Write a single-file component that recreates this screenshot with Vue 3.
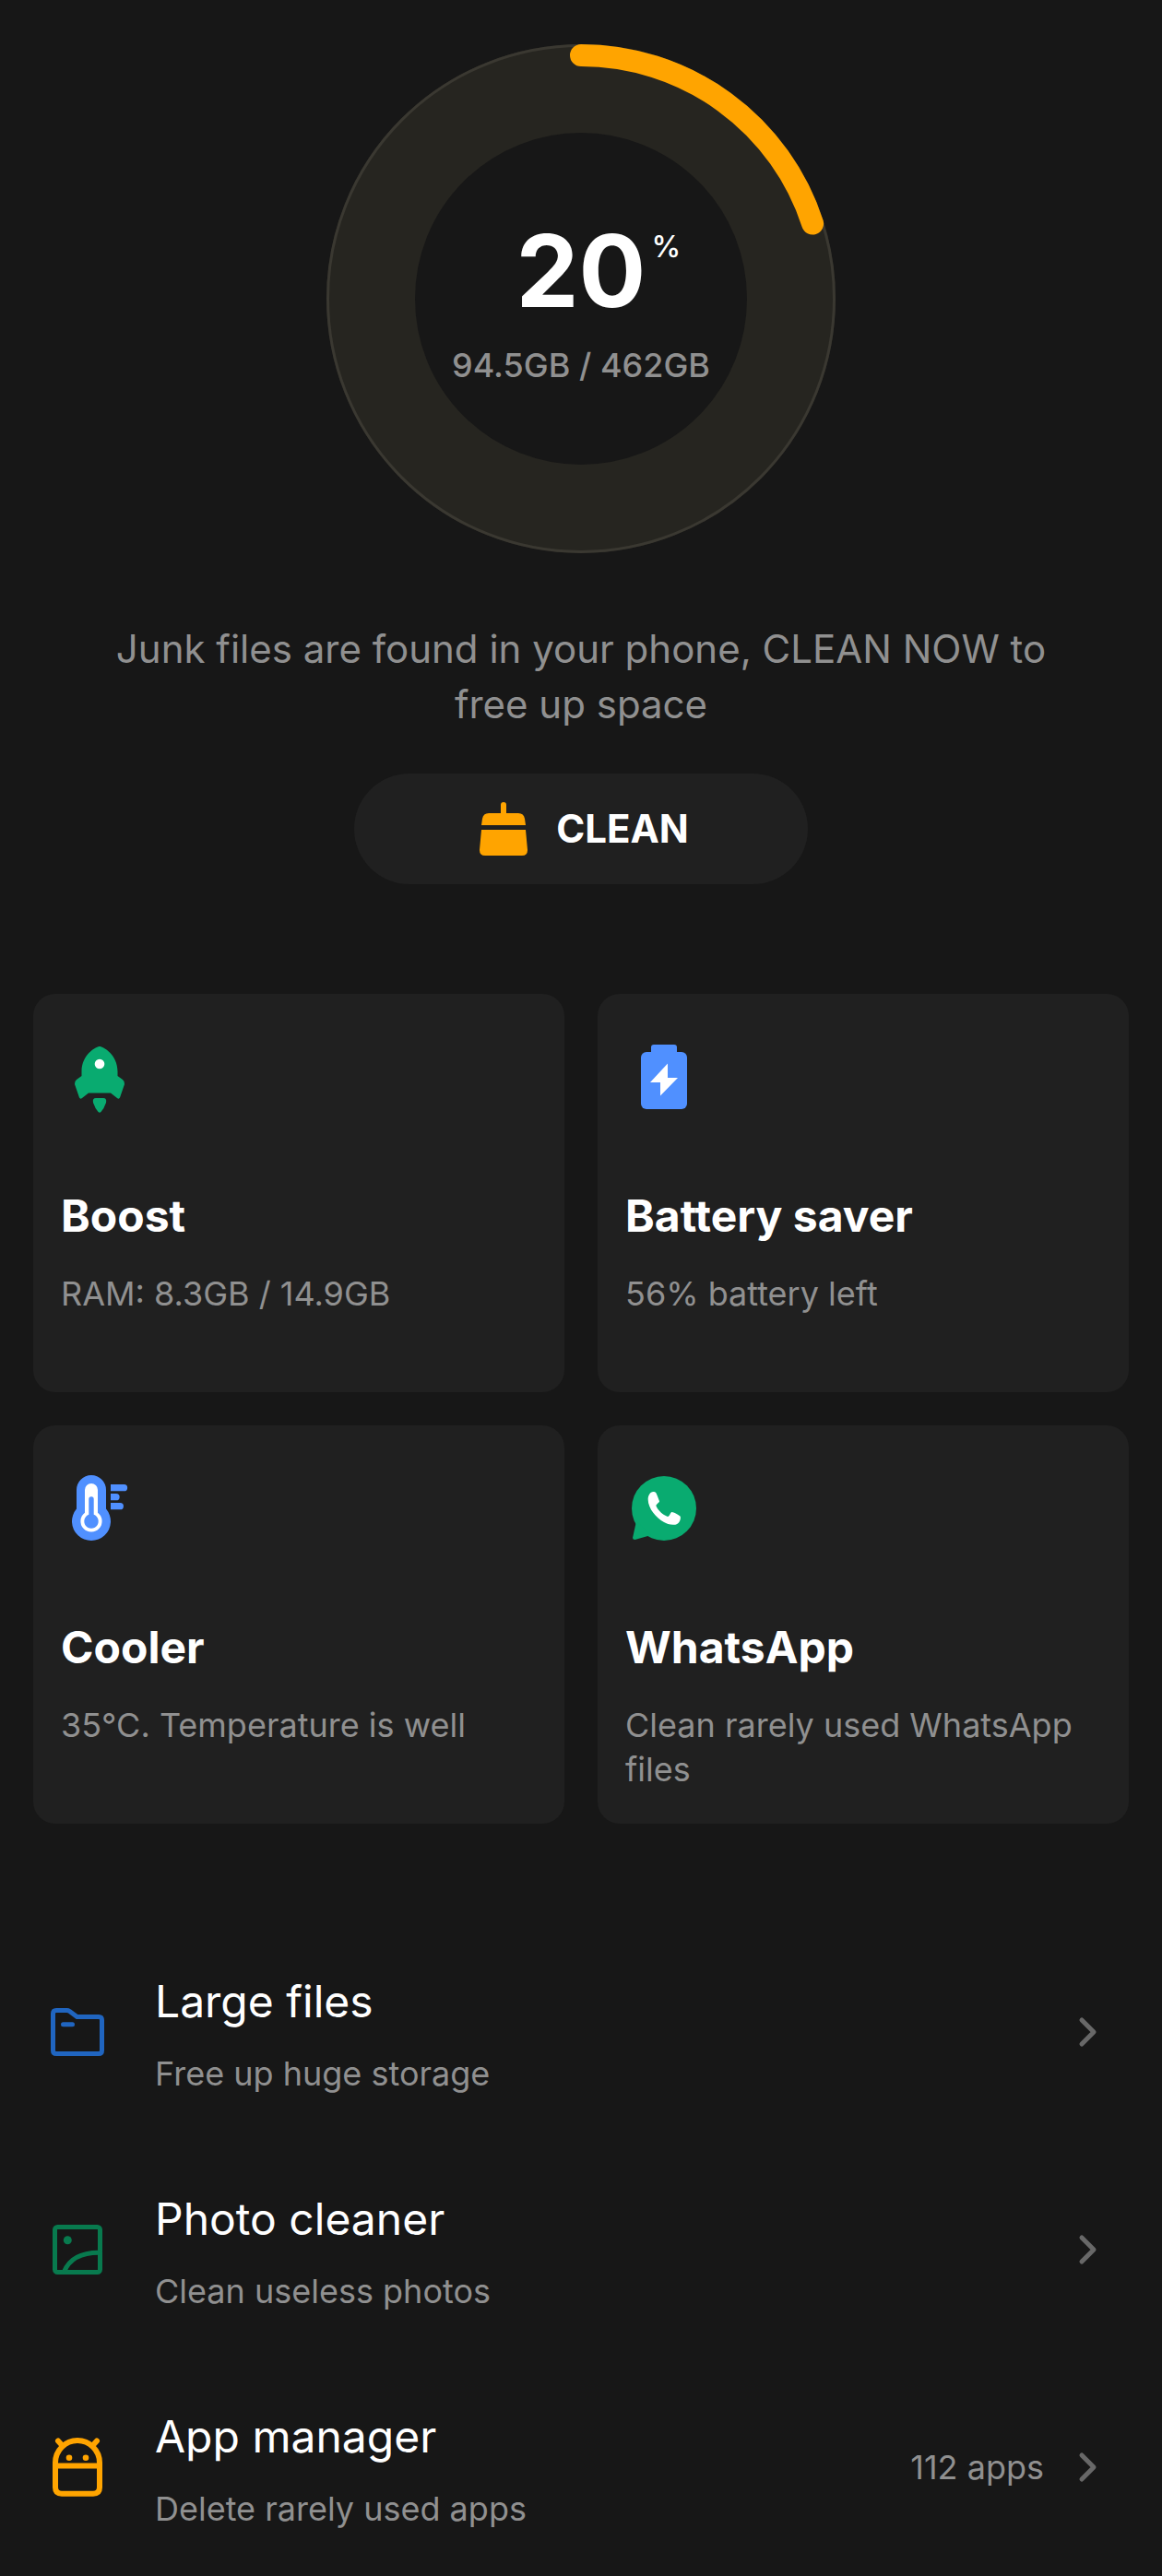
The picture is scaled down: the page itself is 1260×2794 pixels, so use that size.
<template>
  <main class="cleaner">
    <section class="hero">
      <div class="gauge">
        <svg class="gauge-ring" viewBox="0 0 552 552" aria-hidden="true">
          <circle class="track" cx="276" cy="276" r="228" />
          <circle class="rim" cx="276" cy="276" r="274.500" />
          <circle
            class="progress"
            cx="276"
            cy="276"
            r="264"
            pathLength="100"
            :stroke-dasharray="`${usedPercent} 100`"
            transform="rotate(-90 276 276)"
          />
        </svg>
        <div class="gauge-text">
          <p class="percent">{{ usedPercent }}<span class="sign">%</span></p>
          <p class="storage">{{ used }} / {{ total }}</p>
        </div>
      </div>
      <p class="message">Junk files are found in your phone, CLEAN NOW to free up space</p>
      <button class="clean-btn" type="button">
        <svg class="broom" viewBox="0 0 54 60" aria-hidden="true">
          <path d="M24 13V4a3 3 0 0 1 6 0v9h13q6 0 7 6l1 7H3l1-7q1-6 7-6z" />
          <path d="M3 31h48l2 22q0 6-6 6H7q-6 0-6-6z" />
        </svg>
        <span>CLEAN</span>
      </button>
    </section>

    <section class="cards">
      <a v-for="card in cards" :key="card.id" class="card" href="#">
        <svg class="card-icon" viewBox="0 0 84 84" aria-hidden="true">
          <g v-if="card.id === 'boost'">
            <path class="green" d="M42 9C46 9 61.500 18 61.500 36V41L67 45Q69.500 47 69 50L64 64.500Q63 66.500 61 65L54 59.500H30L23 65Q21 66.500 20 64.500L15 50Q14.500 47 17 45L22.500 41V36C22.500 18 38 9 42 9Z" />
            <circle class="white" cx="42" cy="28" r="5.300" />
            <path class="green" d="M38 65H46Q50 65 49 70Q47 76 43.500 80Q42 81.500 40.500 80Q37 76 35 70Q34 65 38 65Z" />
          </g>
          <g v-else-if="card.id === 'battery'">
            <rect class="blue" x="28" y="7" width="28" height="14" rx="3" />
            <rect class="blue" x="17" y="15" width="50" height="62" rx="6" />
            <path class="white" d="M46 27.500V43H57L38 62.500V48H27Z" />
          </g>
          <g v-else-if="card.id === 'cooler'">
            <path class="blue" d="M17 22A16 16 0 0 1 49 22V42.500A21 21 0 1 1 17 42.500Z" />
            <path class="white" d="M26 22A7 7 0 0 1 40 22V46.700A11.600 11.600 0 1 1 26 46.700Z" />
            <path class="blue" d="M30.300 32A2.700 2.700 0 0 1 35.700 32V48.800A7.700 7.700 0 1 1 30.300 48.800Z" />
            <path class="blue" d="M54 16H68.500A3.600 3.600 0 0 1 68.500 23.300H54ZM54 26H60A3.600 3.600 0 0 1 60 33.300H54ZM54 36H64.300A3.600 3.600 0 0 1 64.300 43.300H54Z" />
          </g>
          <g v-else>
            <circle class="green" cx="42" cy="42" r="35" />
            <path class="green" d="M12 56L8 74Q8 76 10.500 76L28 71Z" />
            <path class="white" d="M24.700 32.700C24.500 28 27 24.200 30.300 24C33 24 33.700 25.300 35 29L37 34.300C37 36 33 37.500 33.500 39.500C35.500 44 40.500 49 46 51C48 51 48.500 47 50.300 46C52 45.800 58 49 59.500 50.500C60.500 52 59.500 56 58 57.500C56.500 59.300 54 60 52 59.700C48 59.700 44.500 58.500 42 57C37.500 54.500 33.500 51 30.300 46.700C27 42.500 24.800 37 24.700 32.700Z" />
          </g>
        </svg>
        <h2 class="card-title">{{ card.title }}</h2>
        <p class="card-text">{{ card.text }}</p>
      </a>
    </section>

    <nav class="tools">
      <a v-for="tool in tools" :key="tool.id" class="tool" href="#">
        <svg class="tool-icon" :class="tool.id" viewBox="0 0 72 72" aria-hidden="true">
          <g v-if="tool.id === 'files'">
            <path d="M13 12.500H24.500Q26 12.500 27.500 13.500L35.500 19.500H59Q62.500 19.500 62.500 23V56Q62.500 59.500 59 59.500H13Q9.500 59.500 9.500 56V16Q9.500 12.500 13 12.500Z" />
            <path d="M20.500 27.700H30.500" />
          </g>
          <g v-else-if="tool.id === 'photos'">
            <rect x="11.500" y="11.500" width="49" height="49" rx="3" />
            <circle class="dot" cx="25.300" cy="25.700" r="4.500" />
            <path d="M21.500 60Q30 39 60 39.300" />
          </g>
          <g v-else>
            <path d="M12 31A24 24 0 0 1 60 31V58Q60 64.700 53 64.700H19Q12 64.700 12 58ZM12 34.500H60M15 7.500L20 13M57 7.500L52 13" />
            <circle class="dot" cx="27" cy="25.700" r="3.300" />
            <circle class="dot" cx="45" cy="25.700" r="3.300" />
          </g>
        </svg>
        <div class="tool-body">
          <h2 class="tool-title">{{ tool.title }}</h2>
          <p class="tool-text">{{ tool.text }}</p>
        </div>
        <span v-if="tool.count" class="tool-count">{{ tool.count }}</span>
        <svg class="chevron" viewBox="0 0 24 36" aria-hidden="true">
          <path d="M5 5L18 18L5 31" />
        </svg>
      </a>
    </nav>
  </main>
</template>

<script setup>
import { ref } from 'vue';

const usedPercent = ref(20);
const used = ref('94.5GB');
const total = ref('462GB');

const cards = [
  { id: 'boost', title: 'Boost', text: 'RAM: 8.3GB / 14.9GB' },
  { id: 'battery', title: 'Battery saver', text: '56% battery left' },
  { id: 'cooler', title: 'Cooler', text: '35°C. Temperature is well' },
  { id: 'whatsapp', title: 'WhatsApp', text: 'Clean rarely used WhatsApp files' }
];

const tools = [
  { id: 'files', title: 'Large files', text: 'Free up huge storage' },
  { id: 'photos', title: 'Photo cleaner', text: 'Clean useless photos' },
  { id: 'apps', title: 'App manager', text: 'Delete rarely used apps', count: '112 apps' }
];
</script>

<style>
body {
  background: #171717;
}
</style>

<style scoped>
.cleaner {
  font-family: Inter, Roboto, sans-serif;
  color: #fff;
  background: #171717;
}

h2,
p {
  margin: 0;
}

a {
  color: inherit;
  text-decoration: none;
}

.hero {
  display: flex;
  flex-direction: column;
  align-items: center;
  padding: 48px 108px 0;
}

.gauge {
  display: grid;
  place-items: center;
}

.gauge-ring,
.gauge-text {
  grid-area: 1 / 1;
}

.gauge-ring {
  width: 552px;
  height: 552px;
  fill: none;
}

.track {
  stroke: #262520;
  stroke-width: 96px;
}

.rim {
  stroke: #3a3831;
  stroke-width: 3px;
}

.progress {
  stroke: #ffa400;
  stroke-width: 24px;
  stroke-linecap: round;
}

.gauge-text {
  padding-top: 12px;
  text-align: center;
}

.percent {
  display: flex;
  justify-content: center;
  padding-left: 40px;
  font-size: 108px;
  line-height: 108px;
  font-weight: 700;
}

.sign {
  width: 40px;
  padding: 8px 0 0 4px;
  box-sizing: border-box;
  font-size: 32px;
  line-height: 40px;
  font-weight: 500;
}

.storage {
  margin-top: 24px;
  font-size: 36px;
  line-height: 48px;
  font-weight: 500;
  color: #909090;
}

.message {
  margin-top: 74px;
  font-size: 42px;
  line-height: 60px;
  text-align: center;
  color: #909090;
}

.clean-btn {
  display: flex;
  align-items: center;
  justify-content: center;
  gap: 30px;
  min-width: 492px;
  margin-top: 45px;
  padding: 30px 30px 30px 36px;
  border: 0;
  border-radius: 60px;
  background: #202020;
  color: #fff;
  font-family: inherit;
  font-size: 42px;
  line-height: 60px;
  font-weight: 700;
}

.broom {
  width: 54px;
  height: 60px;
  fill: #ffa400;
}

.cards {
  display: grid;
  grid-template-columns: 1fr 1fr;
  gap: 36px;
  padding: 119px 36px 0;
}

.card {
  min-height: 432px;
  box-sizing: border-box;
  padding: 48px 30px 30px;
  border-radius: 24px;
  background: #202020;
}

.card-icon {
  display: block;
  width: 84px;
  height: 84px;
}

.green {
  fill: #09ab70;
}

.blue {
  fill: #5090ff;
}

.white {
  fill: #fff;
}

.card-title {
  margin-top: 79px;
  font-size: 48px;
  line-height: 60px;
  font-weight: 700;
}

.card-text {
  margin-top: 30px;
  font-size: 36px;
  line-height: 48px;
  color: #909090;
}

.tools {
  padding-top: 108px;
}

.tool {
  display: flex;
  align-items: center;
  min-height: 236px;
  padding: 0 68px 0 48px;
}

.tool-icon {
  flex: none;
  width: 72px;
  height: 72px;
  fill: none;
  stroke: currentColor;
  stroke-width: 5px;
  stroke-linecap: round;
  stroke-linejoin: round;
}

.tool-icon .dot {
  fill: currentColor;
  stroke: none;
}

.files {
  color: #2065c0;
}

.photos {
  color: #087a4e;
}

.apps {
  color: #ffa400;
  stroke-width: 6px;
}

.tool-body {
  flex: 1;
  margin-left: 48px;
  padding-top: 6px;
}

.tool-title {
  font-size: 48px;
  line-height: 60px;
  font-weight: 400;
}

.tool-text {
  margin-top: 24px;
  font-size: 36px;
  line-height: 48px;
  color: #909090;
}

.tool-count {
  font-size: 36px;
  line-height: 48px;
  color: #909090;
}

.chevron {
  flex: none;
  width: 24px;
  height: 36px;
  margin-left: 36px;
  fill: none;
  stroke: #686868;
  stroke-width: 5px;
  stroke-linecap: round;
  stroke-linejoin: round;
}
</style>
